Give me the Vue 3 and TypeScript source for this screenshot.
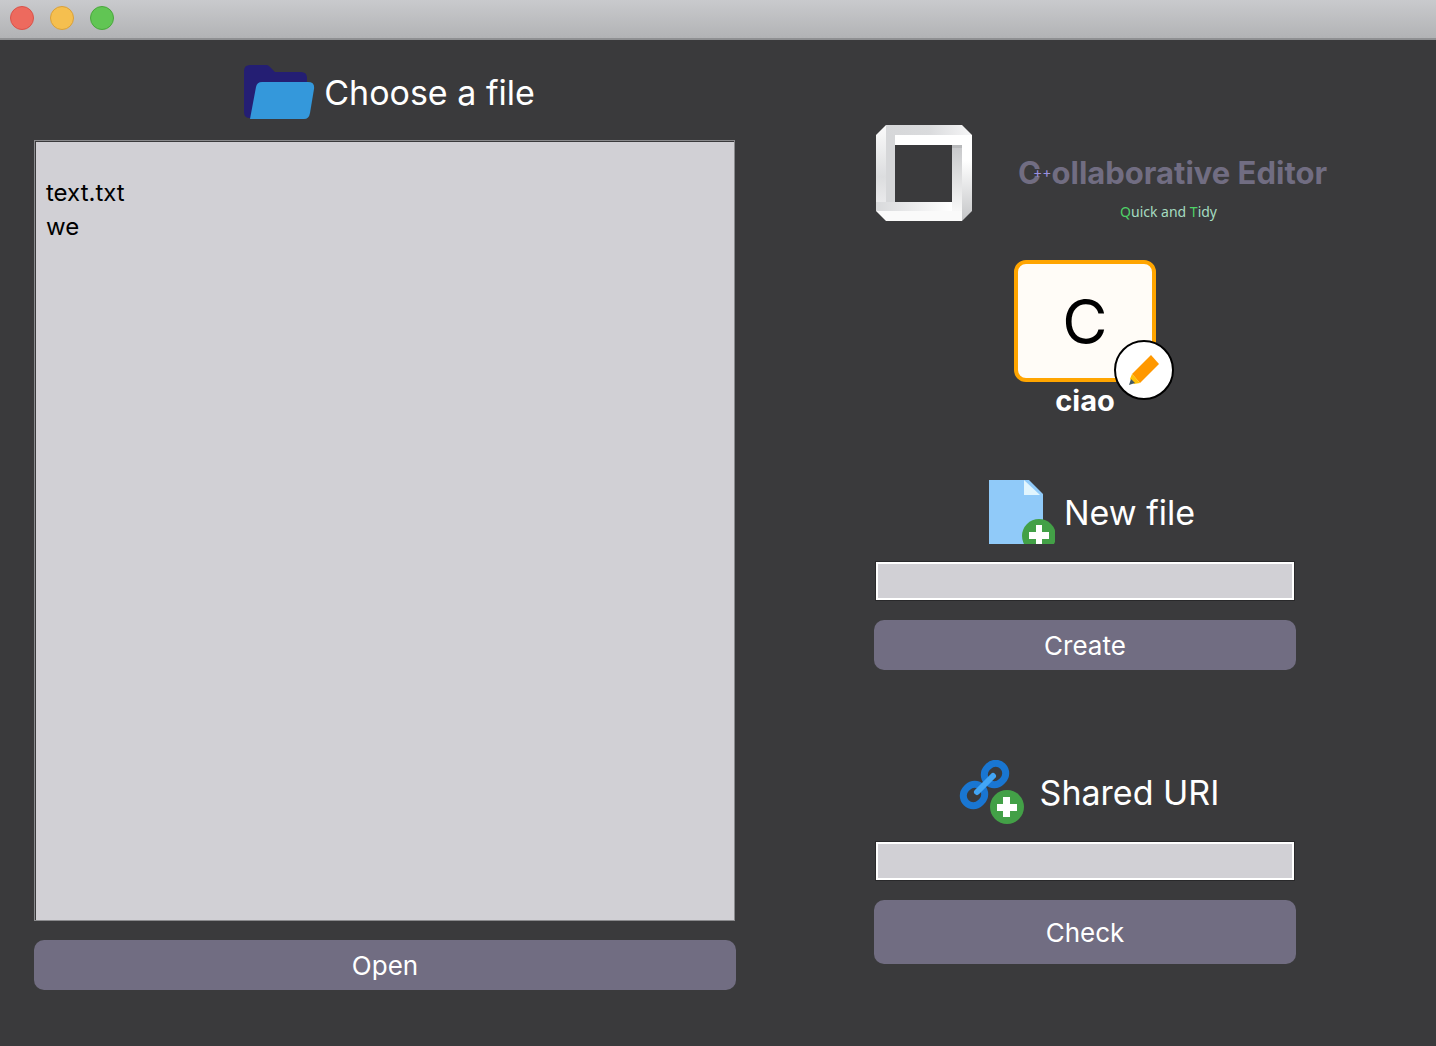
<script setup lang="ts">
import { ref } from 'vue'

const files = ref<string[]>(['text.txt', 'we'])
const selected = ref<string>('')
const newFile = ref<string>('')
const sharedUri = ref<string>('')
</script>

<template>
  <div class="window">
    <header class="titlebar">
      <button class="dot close" type="button" aria-label="Close window"></button>
      <button class="dot minimize" type="button" aria-label="Minimize window"></button>
      <button class="dot maximize" type="button" aria-label="Maximize window"></button>
    </header>

    <main class="content">
      <section class="files">
        <h2 class="heading">
          <svg class="icon" viewBox="0 0 72 64" aria-hidden="true">
            <path fill="#241e73" d="M7 5H23q2 0 3 1l6 6H58q6 0 6 6v20L50 58H7q-6 0-6-6V11q0-6 6-6z" />
            <path fill="#3498db" d="M19 22H65q7 0 6 7l-4 24q-1 6-6 6H7L13 27q1-5 6-5z" />
          </svg>
          <span>Choose a file</span>
        </h2>
        <ul class="list" aria-label="Files">
          <li v-for="name in files" :key="name">
            <button class="entry" type="button" @click="selected = name">{{ name }}</button>
          </li>
        </ul>
        <button class="action" type="button">Open</button>
      </section>

      <section class="side">
        <div class="brand">
          <svg class="logo" viewBox="0 0 96 96" aria-hidden="true">
            <defs>
              <linearGradient id="top" x1="0" y1="0" x2="1" y2="0">
                <stop offset="0" stop-color="#d6d7d9" />
                <stop offset="0.5" stop-color="#dadbdd" />
                <stop offset="1" stop-color="#f6f6f7" />
              </linearGradient>
              <linearGradient id="left" x1="0" y1="0" x2="0" y2="1">
                <stop offset="0" stop-color="#fbfbfb" />
                <stop offset="0.6" stop-color="#dcdddf" />
                <stop offset="1" stop-color="#eeeeef" />
              </linearGradient>
              <linearGradient id="right" x1="0" y1="0" x2="0" y2="1">
                <stop offset="0.3" stop-color="#ffffff" />
                <stop offset="1" stop-color="#c4c5c7" />
              </linearGradient>
              <linearGradient id="inner" x1="0" y1="0" x2="0" y2="1">
                <stop offset="0" stop-color="#c6c7c9" />
                <stop offset="1" stop-color="#f8f8f8" />
              </linearGradient>
              <linearGradient id="low" x1="0" y1="0" x2="1" y2="0">
                <stop offset="0" stop-color="#d8d9db" />
                <stop offset="1" stop-color="#ffffff" />
              </linearGradient>
            </defs>
            <path fill="url(#left)" d="M0 10L10 0V86H0z" />
            <path fill="url(#top)" d="M10 0H86L96 10H10z" />
            <path fill="#d6d7d9" d="M10 10H19V77H10z" />
            <path fill="#ffffff" d="M19 10H96V20H19z" />
            <path fill="url(#inner)" d="M76 20H86V86H76z" />
            <path fill="#b8b9bb" d="M76 20H86V23H76z" />
            <path fill="url(#right)" d="M86 10H96V86L86 96z" />
            <path fill="url(#low)" d="M0 86V77H76V86z" />
            <path fill="#fafafa" d="M0 86H86V96H10z" />
          </svg>
          <div class="brand-text">
            <h1 class="brand-name">C<span class="plus">++</span>ollaborative Editor</h1>
            <p class="tagline"><b>Q</b>uick and <b>T</b>idy</p>
          </div>
        </div>

        <div class="profile">
          <div class="avatar">
            <span>C</span>
            <button class="edit" type="button" aria-label="Edit profile">
              <svg viewBox="0 0 60 60" aria-hidden="true">
                <path fill="#ff9800" d="M37 15L45 24L26 43L18 34z" />
                <path fill="#ffc107" d="M18 34L26 43L20 44L16 39z" />
                <path fill="#455a64" d="M17 39L21 43L15 45z" />
              </svg>
            </button>
          </div>
          <p class="username">ciao</p>
        </div>

        <form class="block" @submit.prevent>
          <label class="heading" for="new-file">
            <svg class="icon" viewBox="0 0 72 64" aria-hidden="true">
              <path fill="#90caf9" d="M6 0H46L60 14V64H6z" />
              <path fill="#e1f5fe" d="M41 0V15H57z" />
              <circle cx="56" cy="56" r="17" fill="#43a047" />
              <path fill="#fff" d="M53 45h6v7h7v7h-7v7h-6v-7h-7v-7h7z" />
            </svg>
            <span>New file</span>
          </label>
          <input id="new-file" v-model="newFile" class="field" type="text" />
          <button class="action" type="submit">Create</button>
        </form>

        <form class="block" @submit.prevent>
          <label class="heading" for="shared-uri">
            <svg class="icon" viewBox="0 0 72 64" aria-hidden="true">
              <g fill="none" stroke="#1976d2" stroke-width="7">
                <rect x="-11" y="-10" width="22" height="20" rx="10" transform="translate(36 14) rotate(-45)" />
                <rect x="-11" y="-10" width="22" height="20" rx="10" transform="translate(15 35) rotate(-45)" />
              </g>
              <path fill="none" stroke="#42a5f5" stroke-width="6" stroke-linecap="round" d="M18 32L34 16" />
              <circle cx="48" cy="47" r="17" fill="#43a047" />
              <path fill="#fff" d="M44 37h7v7h7v7h-7v6h-7v-6h-6v-7h6z" />
            </svg>
            <span>Shared URI</span>
          </label>
          <input id="shared-uri" v-model="sharedUri" class="field" type="text" />
          <button class="action tall" type="submit">Check</button>
        </form>
      </section>
    </main>
  </div>
</template>

<style>
body {
  margin: 0;
  background: #3a3a3c;
}
</style>

<style scoped>
.window {
  box-sizing: border-box;
  display: flex;
  flex-direction: column;
  min-height: 100vh;
  background: #3a3a3c;
  color: #fff;
  font-family: Inter, "Liberation Sans", sans-serif;
}

.titlebar {
  box-sizing: border-box;
  display: flex;
  gap: 16px;
  height: 40px;
  padding: 6px 10px;
  background: linear-gradient(#c9cacd, #b2b3b5);
  border-bottom: 2px solid #8f9092;
}

.dot {
  box-sizing: border-box;
  width: 24px;
  height: 24px;
  padding: 0;
  border: 1px solid;
  border-radius: 50%;
}

.close {
  background: #ed6a5e;
  border-color: #d9534a;
}

.minimize {
  background: #f5bf4f;
  border-color: #d9a03a;
}

.maximize {
  background: #61c554;
  border-color: #4aa73d;
}

.content {
  display: grid;
  flex: 1;
  grid-template-columns: minmax(0, 702fr) minmax(0, 422fr);
  gap: 138px;
  padding: 20px 140px 56px 34px;
}

.files {
  display: flex;
  flex-direction: column;
}

.heading {
  display: flex;
  align-items: center;
  justify-content: center;
  gap: 9px;
  height: 64px;
  margin: 0;
  padding-left: 8px;
  font-size: 34px;
  font-weight: 400;
  white-space: nowrap;
}

.icon {
  flex: none;
  width: 72px;
  height: 64px;
}

.list {
  flex: 1;
  margin: 16px 1px 19px 0;
  padding: 35px 11px;
  background: #d1d0d5;
  border: 1px solid #8a8a8d;
  box-shadow: inset 1px 1px #3a3a3c;
  list-style: none;
}

.entry {
  display: block;
  width: 100%;
  height: 34px;
  padding: 0;
  border: 0;
  background: none;
  color: #000;
  font: 24px/34px Inter, "Liberation Sans", sans-serif;
  text-align: left;
}

.action {
  height: 50px;
  padding: 2px 0 0;
  border: 0;
  border-radius: 10px;
  background: #716d82;
  color: #fff;
  font: 26px/32px Inter, "Liberation Sans", sans-serif;
}

.tall {
  height: 64px;
}

.side {
  display: flex;
  flex-direction: column;
  padding-top: 65px;
}

.brand {
  display: flex;
  gap: 46px;
  height: 96px;
  padding-left: 2px;
}

.logo {
  flex: none;
  width: 96px;
  height: 96px;
}

.brand-text {
  flex: none;
  padding-top: 30px;
  text-align: center;
}

.brand-name {
  margin: 0;
  color: #716d82;
  font-size: 31px;
  font-weight: 700;
  line-height: 36px;
  white-space: nowrap;
}

.plus {
  margin-left: -8px;
  color: #9a90e0;
  font-size: 14px;
  font-weight: 400;
  line-height: 1;
  vertical-align: 7px;
}

.tagline {
  margin: 11px 0 0;
  padding-right: 8px;
  color: #a5dcc0;
  font: 14px/20px "Noto Sans", sans-serif;
}

.tagline b {
  color: #4ed267;
  font-weight: 400;
}

.profile {
  display: flex;
  flex-direction: column;
  align-items: center;
  margin: 39px 0 60px;
}

.avatar {
  position: relative;
  box-sizing: border-box;
  display: flex;
  align-items: center;
  justify-content: center;
  width: 142px;
  height: 122px;
  border: 4px solid #ffa500;
  border-radius: 12px;
  background: #fffcf7;
  color: #000;
  font-size: 62px;
}

.edit {
  position: absolute;
  right: -22px;
  bottom: -22px;
  box-sizing: border-box;
  width: 60px;
  height: 60px;
  padding: 0;
  border: 2px solid #000;
  border-radius: 50%;
  background: #fff;
}

.edit svg {
  display: block;
  width: 60px;
  height: 60px;
  margin: -2px;
}

.username {
  margin: 0;
  font-size: 29px;
  font-weight: 700;
  line-height: 38px;
}

.block {
  display: flex;
  flex-direction: column;
}

.block + .block {
  margin-top: 90px;
}

.field {
  box-sizing: border-box;
  height: 38px;
  margin: 18px 2px 20px;
  padding: 0 8px;
  border: 2px solid #fff;
  border-radius: 0;
  outline: 1px solid #29292b;
  background: #d1d0d5;
  color: #000;
  font: 24px/30px Inter, "Liberation Sans", sans-serif;
}
</style>
